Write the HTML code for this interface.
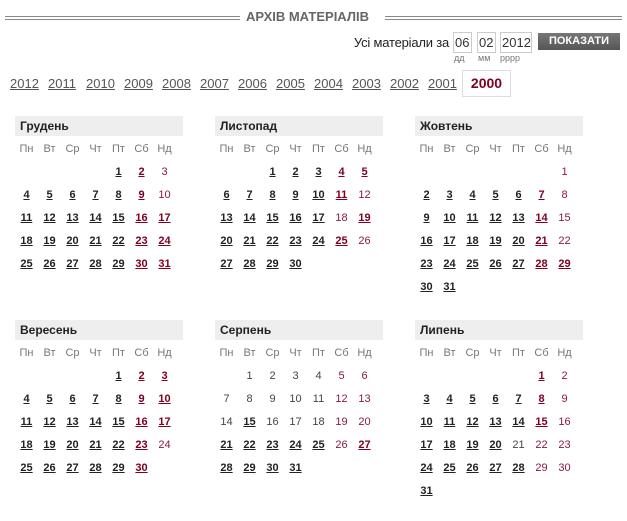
<!DOCTYPE html>
<html><head><meta charset="utf-8"><style>
body{margin:0;width:627px;height:521px;background:#fff;font-family:"Liberation Sans",Arial,sans-serif;position:relative;overflow:hidden}
.ln{position:absolute;top:16px;height:2px;border-top:1px solid #888;border-bottom:1px solid #888}
.ttl{position:absolute;top:9px;left:246px;font-size:13px;font-weight:bold;color:#666}
.frm{position:absolute;top:35px;right:178px;font-size:13px;color:#222;letter-spacing:-0.2px}
.inp{position:absolute;top:32px;border:1px solid #ccc;font-size:13px;color:#333;line-height:19px;padding-left:1px;box-sizing:border-box;height:21px}
.btn{position:absolute;left:538px;top:33px;width:82px;height:17px;background:linear-gradient(#777,#555);color:#fff;font-size:11px;font-weight:bold;text-align:center;line-height:17px}
.lbl{position:absolute;top:53px;font-size:9px;color:#777}
.yr{position:absolute;top:76px;font-size:13px;color:#555;text-decoration:underline}
.sel{position:absolute;left:462px;top:70px;width:47px;height:25px;border:1px solid #ddd;font-size:14px;font-weight:bold;color:#800020;text-align:center;line-height:25px}
.blk{position:absolute;width:168px}
.hd{height:20px;background:#eee;font-size:12px;font-weight:bold;color:#222;line-height:20px;padding-left:5px}
.dn,.d{position:absolute;width:23px;text-align:center;font-size:11px}
.dn{color:#777}
.d{color:#444}
.d.w{color:#8b1a3a}
.d.l{font-weight:bold;color:#222;text-decoration:underline}
.d.l.w{color:#800020}
</style></head><body>
<div class="ln" style="left:5px;width:235px"></div>
<div class="ln" style="left:385px;width:237px"></div>
<div class="ttl">АРХІВ МАТЕРІАЛІВ</div>
<div class="frm">Усі матеріали за</div>
<div class="inp" style="left:453px;width:19px">06</div>
<div class="inp" style="left:477px;width:19px">02</div>
<div class="inp" style="left:500px;width:32px">2012</div>
<div class="btn">ПОКАЗАТИ</div>
<div class="lbl" style="left:454px">дд</div>
<div class="lbl" style="left:478px">мм</div>
<div class="lbl" style="left:500px">рррр</div>
<div id="yrs"></div>
<div class="sel">2000</div>
<div id="cal"></div>
<script>
var ys=document.getElementById('yrs'),h='',x=10;
for(var y=2012;y>=2001;y--){h+='<div class="yr" style="left:'+x+'px">'+y+'</div>';x+=38;}
ys.innerHTML=h;
var M=[
["Грудень",15,116,4,31,[3,10]],
["Листопад",215,116,2,30,[12,18,26]],
["Жовтень",415,116,6,31,[1,8,15,22]],
["Вересень",15,320,4,30,[24]],
["Серпень",215,320,1,31,[1,2,3,4,5,6,7,8,9,10,11,12,13,14,16,17,18,19,20,26]],
["Липень",415,320,5,31,[2,9,16,21,22,23,29,30]]];
var dn=["Пн","Вт","Ср","Чт","Пт","Сб","Нд"],out='';
M.forEach(function(m){
 out+='<div class="blk" style="left:'+m[1]+'px;top:'+m[2]+'px"><div class="hd">'+m[0]+'</div>';
 for(var i=0;i<7;i++)out+='<div class="dn" style="left:'+(i*23)+'px;top:27px">'+dn[i]+'</div>';
 for(var d=1;d<=m[4];d++){var p=m[3]+d-1,c=p%7,r=Math.floor(p/7);
  var cls='d'+(c>=5?' w':'')+(m[5].indexOf(d)<0?' l':'');
  out+='<div class="'+cls+'" style="left:'+(c*23)+'px;top:'+(50+r*23)+'px">'+d+'</div>';}
 out+='</div>';});
document.getElementById('cal').innerHTML=out;
</script>
</body></html>
